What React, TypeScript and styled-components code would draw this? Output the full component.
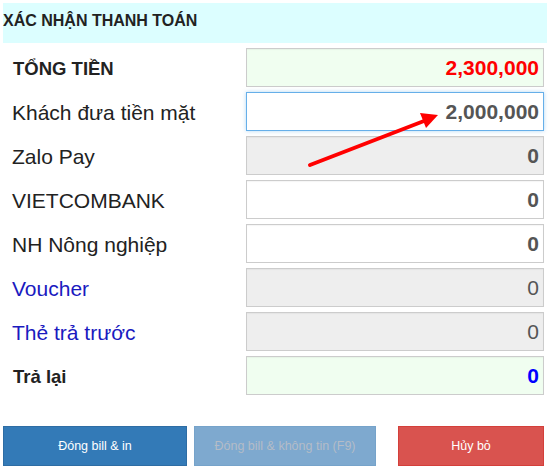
import React from 'react';
import styled, { createGlobalStyle } from 'styled-components';

const GlobalStyle = createGlobalStyle`
  body {
    margin: 0;
    background: #fff;
    font-family: "Liberation Sans", Arial, sans-serif;
  }
`;

const Wrapper = styled.div`
  position: relative;
  width: 550px;
  height: 469px;
  padding: 3px;
  box-sizing: border-box;
`;

const Header = styled.div`
  height: 40px;
  box-sizing: border-box;
  padding-top: 9px;
  background-color: #dcfeff;
  color: #222;
  font-size: 16px;
  font-weight: bold;
  line-height: 18px;
`;

const Form = styled.div`
  display: flex;
  flex-direction: column;
  gap: 5px;
  margin-top: 5px;
  padding-right: 3px;
`;

const Row = styled.div`
  display: grid;
  grid-template-columns: 243px 298px;
  align-items: center;
  height: 39px;
`;

type LabelTone = 'strong' | 'normal' | 'link' | 'small';

const Label = styled.div<{ $tone: LabelTone }>`
  padding-top: 2px;
  padding-left: ${(p) => (p.$tone === 'strong' || p.$tone === 'small' ? '10px' : '9px')};
  font-size: ${(p) => (p.$tone === 'strong' || p.$tone === 'small' ? '18.5px' : '21px')};
  font-weight: ${(p) => (p.$tone === 'strong' || p.$tone === 'small' ? 'bold' : 'normal')};
  color: ${(p) => (p.$tone === 'link' ? '#1a1abf' : '#222')};
`;

type FieldKind = 'total' | 'focus' | 'plain' | 'disabled' | 'change';

const Field = styled.div<{ $kind: FieldKind; $light?: boolean }>`
  height: 39px;
  box-sizing: border-box;
  display: flex;
  align-items: center;
  justify-content: flex-end;
  padding-right: 4px;
  border: 1px solid ${(p) => (p.$kind === 'focus' ? '#66afe9' : '#ccc')};
  box-shadow: ${(p) =>
    p.$kind === 'focus' ? '0 0 4px rgba(102, 175, 233, 0.5)' : 'inset 0 1px 1px rgba(0,0,0,0.04)'};
  background-color: ${(p) =>
    p.$kind === 'total' || p.$kind === 'change'
      ? '#f0fef0'
      : p.$kind === 'disabled'
      ? '#eeeeee'
      : '#fff'};
  font-size: 21px;
  font-weight: ${(p) => (p.$light ? 'normal' : 'bold')};
  color: ${(p) =>
    p.$kind === 'total' ? '#ff0000' : p.$kind === 'change' ? '#0000ff' : '#555'};
`;

const Buttons = styled.div`
  display: flex;
  margin-top: 31px;
`;

type BtnKind = 'primary' | 'muted' | 'danger';

const Button = styled.button<{ $kind: BtnKind; $w: number; $ml: number }>`
  width: ${(p) => p.$w}px;
  margin-left: ${(p) => p.$ml}px;
  height: 40px;
  border: 1px solid
    ${(p) => (p.$kind === 'danger' ? '#d43f3a' : p.$kind === 'muted' ? '#76a3ca' : '#2e6da4')};
  background-color: ${(p) =>
    p.$kind === 'danger' ? '#d9534f' : p.$kind === 'muted' ? '#7ea9cf' : '#337ab7'};
  color: ${(p) => (p.$kind === 'muted' ? '#b4bcc7' : '#fff')};
  font-family: "Liberation Sans", Arial, sans-serif;
  font-size: 12.5px;
  padding: 0;
  cursor: pointer;
`;

const Arrow = styled.svg`
  position: absolute;
  left: 0;
  top: 0;
  pointer-events: none;
`;

const rows: { label: string; tone: LabelTone; kind: FieldKind; value: string; light?: boolean }[] = [
  { label: 'TỔNG TIỀN', tone: 'strong', kind: 'total', value: '2,300,000' },
  { label: 'Khách đưa tiền mặt', tone: 'normal', kind: 'focus', value: '2,000,000' },
  { label: 'Zalo Pay', tone: 'normal', kind: 'disabled', value: '0' },
  { label: 'VIETCOMBANK', tone: 'normal', kind: 'plain', value: '0' },
  { label: 'NH Nông nghiệp', tone: 'normal', kind: 'plain', value: '0' },
  { label: 'Voucher', tone: 'link', kind: 'disabled', value: '0', light: true },
  { label: 'Thẻ trả trước', tone: 'link', kind: 'disabled', value: '0', light: true },
  { label: 'Trả lại', tone: 'small', kind: 'change', value: '0' },
];

export default function App() {
  return (
    <Wrapper>
      <GlobalStyle />
      <Header>XÁC NHẬN THANH TOÁN</Header>
      <Form>
        {rows.map((r) => (
          <Row key={r.label}>
            <Label $tone={r.tone}>{r.label}</Label>
            <Field $kind={r.kind} $light={r.light}>{r.value}</Field>
          </Row>
        ))}
      </Form>
      <Buttons>
        <Button $kind="primary" $w={184} $ml={0}>Đóng bill &amp; in</Button>
        <Button $kind="muted" $w={182} $ml={7}>Đóng bill &amp; không tin (F9)</Button>
        <Button $kind="danger" $w={146} $ml={22}>Hủy bỏ</Button>
      </Buttons>
      <Arrow width="550" height="469" viewBox="0 0 550 469">
        <line x1="310" y1="165" x2="424" y2="121" stroke="#ff0000" strokeWidth="4" strokeLinecap="round" />
        <polygon points="438,115 420,113 426,128" fill="#ff0000" />
      </Arrow>
    </Wrapper>
  );
}
